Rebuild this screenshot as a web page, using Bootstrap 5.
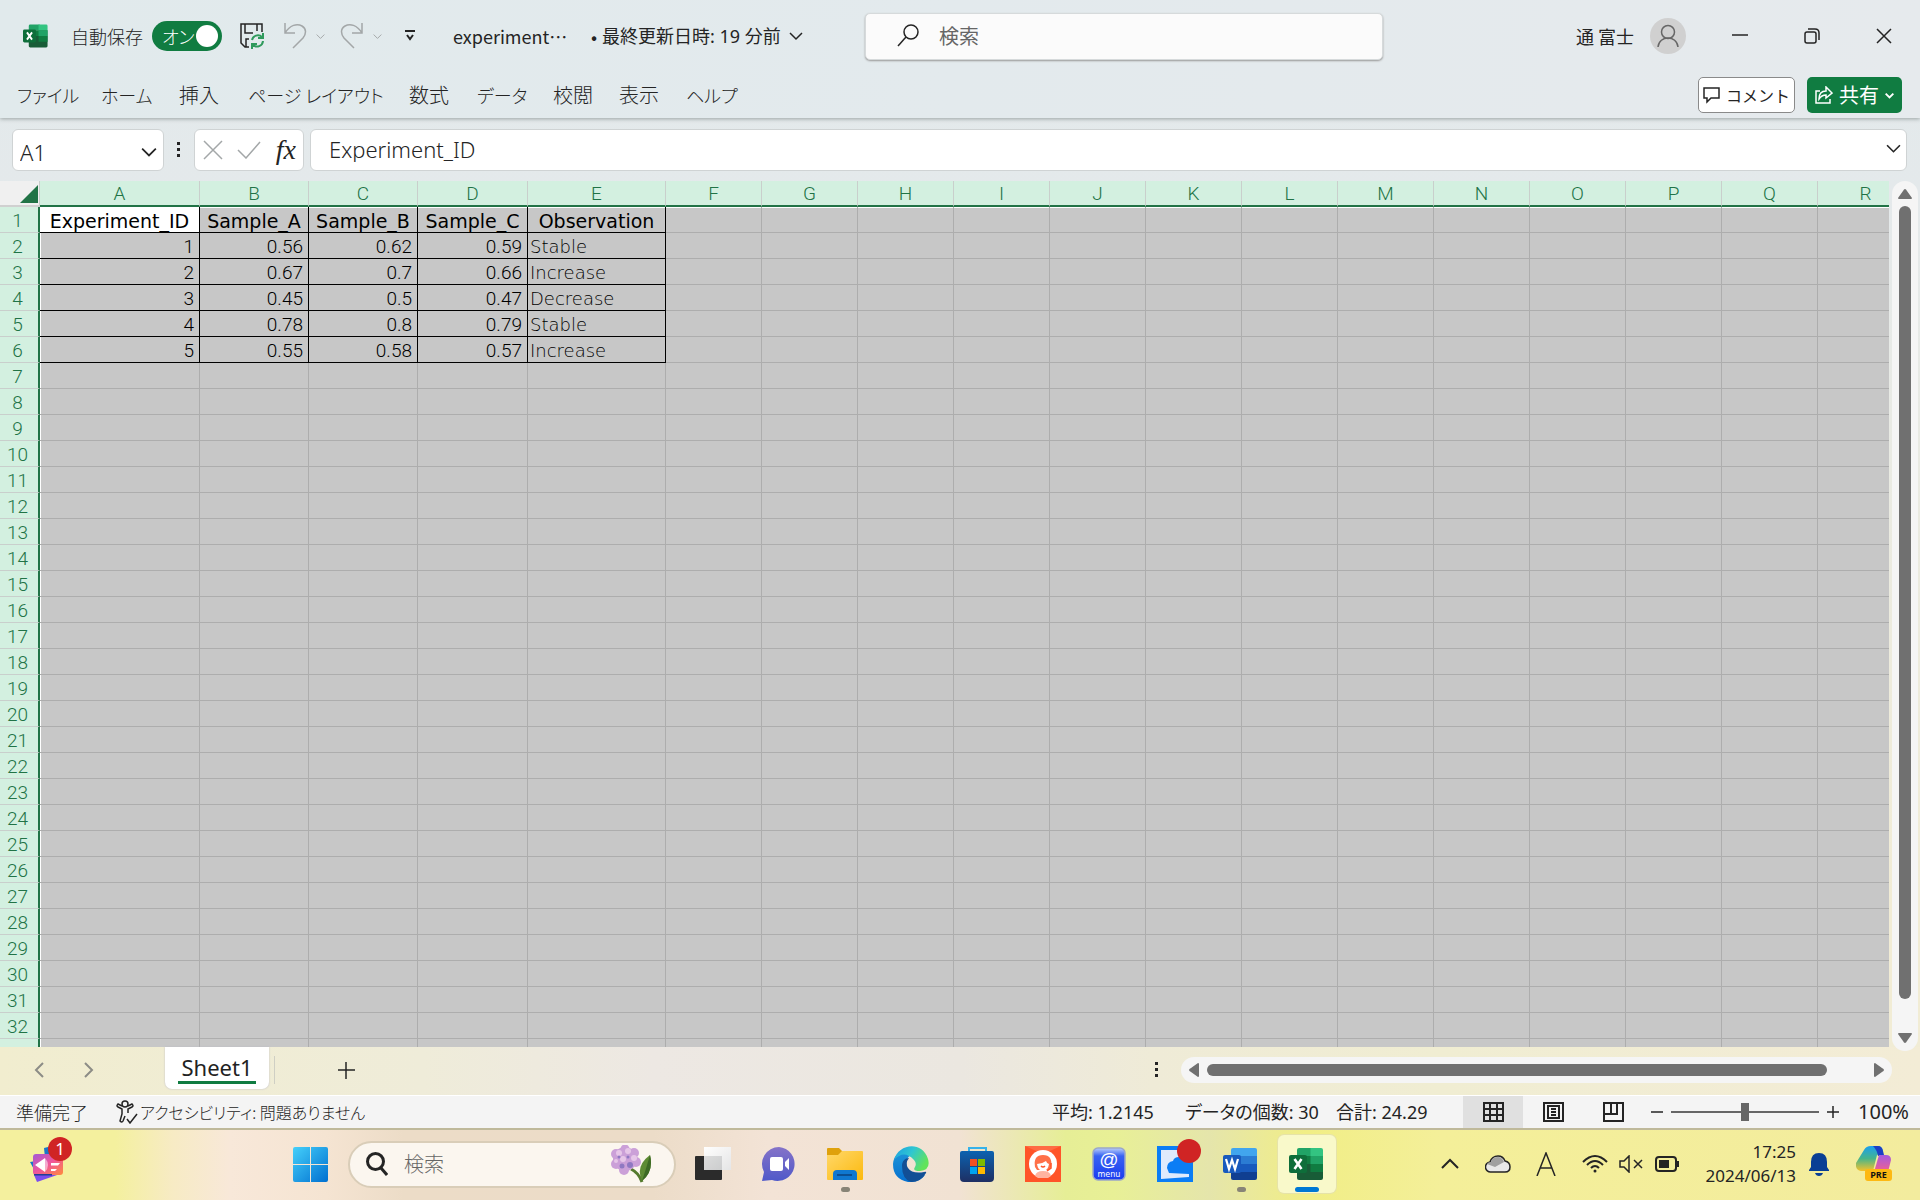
<!DOCTYPE html>
<html lang="ja">
<head>
<meta charset="utf-8">
<meta name="viewport" content="width=device-width, initial-scale=1">
<title>experiment - Excel</title>
<link href="https://cdn.jsdelivr.net/npm/bootstrap@5.3.0/dist/css/bootstrap.min.css" rel="stylesheet">
<style>
:root{--xl:#107c41;--ink:#242424;--head:#d3f0e0;--headline:#c9cfcc;--cell:#c7c7c7;--cellline:#adadad}
body{font-family:"Noto Sans","Noto Sans CJK JP",sans-serif;font-size:18px;line-height:26px;color:var(--ink);font-feature-settings:"palt";background:linear-gradient(#e3eaec 0,#e4e9eb 16%,#f1ecd5 75%);overflow:hidden}
svg{display:block;flex:none;fill:none;stroke:currentColor;stroke-width:1.5}
.plain{border:0;background:none;padding:0;color:inherit;display:flex;align-items:center;justify-content:center;flex:none}
.jp{font-family:"Noto Sans CJK JP",sans-serif;font-weight:300}
.latin{font-family:"Noto Sans","Noto Sans CJK JP",sans-serif}
/* title bar */
.titlebar{height:72px}
.ribbon{background:linear-gradient(90deg,#e1eaec,#e3eaed 50%,#e6eaed);box-shadow:0 1px 4px #9aa3a3;position:relative}
.saveswitch{width:70px;height:30px;border-radius:15px;background:var(--xl);color:#fff;padding:0 4px 0 10px}
.saveknob{width:22px;height:22px;border-radius:50%;background:#fff}
.quick{width:24px;height:32px}
.muted{color:#a3a7a8}
.findbox{width:518px;height:47px;background:#fbfbfb;border:1px solid #d6dadb;border-radius:5px;box-shadow:0 1px 2px #999;padding:0 30px}
.bare{border:0;background:none;outline:0;padding:0;min-width:0;color:inherit;width:100%}
.bare::placeholder{color:#666;opacity:1}
.avatar{width:36px;height:36px;border-radius:50%;background:#d0d0d0;color:#666}
.wbtn{width:72px;height:72px}
/* ribbon tabs */
.tabs{height:46px;padding:0 18px 0 17px}
.tabgrid{display:grid;grid-template-columns:84px 78px 69px 161px 68px 76px 66px 67px 70px;font-size:20px;align-items:center}
.tabgrid a{color:inherit;text-decoration:none;white-space:nowrap}
.tabgrid .kana{font-size:18px}
.rbtn{height:36px;border-radius:5px;font-size:20px;padding:0 7px;gap:6px}
.rbtn.cm{background:#fff;border:1px solid #8a8a8a;width:97px;font-size:16px}
.rbtn.sh{background:var(--xl);color:#fff;width:95px}
/* formula bar */
.fbar{padding:11px 13px 10px 12px}
.fbox{height:42px;background:#fff;border:1px solid #cfd3d4;border-radius:6px}
.fbox .bare{font-size:22px;font-weight:300}
/* grid */
.sheetarea{min-height:0}
.gridwrap{overflow:hidden;min-width:0;background:var(--cell)}
.xl{table-layout:fixed;border-collapse:separate;border-spacing:0;width:1914px;font-family:Roboto,sans-serif;font-size:19px;font-weight:300;color:#000;line-height:22px}
.xl th,.xl td{height:26px;padding:3px 5px 0 2px;overflow:hidden;white-space:nowrap;border-right:1px solid var(--cellline);border-bottom:1px solid var(--cellline);vertical-align:bottom}
.xl thead th{background:var(--head);color:#217346;font-weight:300;text-align:center;border-right-color:var(--headline);border-bottom:2px solid #217346;padding:2px 0 0}
.xl thead th.cornercell{background:#f0f0f0;border-bottom-color:#d0d0d0}
.cornercell svg{margin:0 1px 2px auto}
.xl tbody th{background:var(--head);color:#217346;font-weight:300;text-align:center;border-right:2px solid #217346;border-bottom-color:var(--headline);padding:3px 3px 0 0}
.xl tbody td:nth-child(2){box-shadow:inset 1px 0 #fff}
.xl tbody tr:first-child td{box-shadow:inset 0 1px #fff}
.xl td.filled{border-color:#000}
.xl td.num{text-align:right}
.xl td.txt,.xl td.ttl{font-family:"DejaVu Sans",sans-serif;font-size:18px;font-weight:200}
.xl td.ttl{font-size:19px;font-weight:400;text-align:center;padding:3px 0 0}
.xl td.cur{background:#fff}
.vbar{width:26px;margin:0 2px -4px 3px;border-radius:13px;background:#f5f5f5;color:#707070;padding:8px 0;position:relative}
.hbar{height:26px;border-radius:13px;background:#f5f5f5;color:#707070;padding:0 8px}
.thumb{background:#707070;border-radius:6px}
.scrollarrow{fill:currentColor;stroke:none}
/* sheet tabs */
.sheettabs{height:48px;padding-bottom:2px;background:linear-gradient(90deg,#f1edcf 0,#efecd9 22%,#ede8e3 34%,#ebe7e0 50%,#efebd7 60%,#f0edd2 75%,#f3ecd6)}
.sheettab{width:104px;height:42px;background:#fff;border-radius:0 0 7px 7px;box-shadow:0 0 2px #b9b9c6;font-size:22px;line-height:28px;align-self:flex-start;color:#222;text-decoration:none}
.sheettab span{border-bottom:3px solid var(--xl);width:78px}
.tabrule{width:1px;height:28px;background:#cfcfc4;margin-left:5px}
/* status */
.status{height:33px;background:#f4f4f4;border-top:1px solid #fff}
.viewbtn{width:60px;height:32px}
.viewbtn.on{background:#e0e0e0}
.zoomrange{appearance:none;width:148px;height:18px;background:linear-gradient(#666,#666) center/100% 2px no-repeat;margin:0}
.zoomrange::-webkit-slider-thumb{appearance:none;width:8px;height:18px;background:#666}
/* taskbar */
.taskbar{height:72px;padding-bottom:2px;border-top:2px solid #bfb99a;background:linear-gradient(90deg,#f4f09e 0,#f4f09e 6%,#f7ebc4 9%,#f8e8d9 12%,#f5e4d2 17%,#ecdcc7 21%,#ecdcc8 34%,#f3e3d6 40%,#f1e2d3 50%,#e6ee96 55.5%,#e8f096 58%,#e5e5ab 63%,#f1ee86 68%,#f4ef99 75%,#f3ec9e)}
.tfind{width:328px;height:47px;border-radius:24px;background:#fbf6ef;border:2px solid #d9cdb8;padding:0 22px 0 16px;margin:0 8px 0 20px}
.app{width:58px;height:58px;border-radius:6px;position:relative}
.app.on{background:#f9f9ca;box-shadow:0 0 0 1px #e6e3a8}
.app.run::after{content:"";position:absolute;bottom:1px;left:50%;margin-left:-4px;width:9px;height:5px;border-radius:3px;background:#888477}
.app.on::after{width:24px;margin-left:-12px;background:#0078d4}
.dotbadge{position:absolute;width:24px;height:24px;border-radius:50%;background:#d02424;color:#fff;line-height:24px;font-size:17px;text-align:center}
.app svg,.logo{stroke:none}
.apps{gap:8px}
.clock{font-size:17px;line-height:24px;width:100px}
</style>
<script src="https://cdn.jsdelivr.net/npm/bootstrap@5.3.0/dist/js/bootstrap.bundle.min.js"></script>
</head>
<body class="vh-100 d-flex flex-column">
<svg width="0" height="0" class="position-absolute" aria-hidden="true">
 <defs>
  <linearGradient id="gwin" x1="0" y1="0" x2="1" y2="1"><stop offset="0" stop-color="#45d0fa"/><stop offset="1" stop-color="#006fd0"/></linearGradient>
  <linearGradient id="gpink" x1="0" y1="0" x2="1" y2="1"><stop offset="0" stop-color="#a259d8"/><stop offset=".5" stop-color="#f0569a"/><stop offset="1" stop-color="#ff8a3c"/></linearGradient>
  <linearGradient id="gchat" x1="0" y1="0" x2="0" y2="1"><stop offset="0" stop-color="#8573c8"/><stop offset="1" stop-color="#5059c9"/></linearGradient>
  <linearGradient id="gfold" x1="0" y1="0" x2="1" y2="1"><stop offset="0" stop-color="#ffd86a"/><stop offset="1" stop-color="#fcb90e"/></linearGradient>
  <linearGradient id="gedge" x1="0" y1="0" x2="1" y2=".5"><stop offset="0" stop-color="#1b9de2"/><stop offset=".5" stop-color="#2fc6d2"/><stop offset="1" stop-color="#62e35b"/></linearGradient>
  <linearGradient id="gedge2" x1="0" y1="0" x2="0" y2="1"><stop offset="0" stop-color="#1c93d8"/><stop offset="1" stop-color="#0670cf"/></linearGradient>
  <linearGradient id="gstore" x1="0" y1="0" x2="0" y2="1"><stop offset="0" stop-color="#0c62b0"/><stop offset="1" stop-color="#1e2f63"/></linearGradient>
  <linearGradient id="gmenu" x1="0" y1="0" x2="0" y2="1"><stop offset="0" stop-color="#bcd0fb"/><stop offset=".25" stop-color="#3863f2"/><stop offset="1" stop-color="#1b3cf0"/></linearGradient>
  <linearGradient id="gtv" x1="0" y1="0" x2="1" y2="1"><stop offset="0" stop-color="#fff"/><stop offset="1" stop-color="#d4d6d8"/></linearGradient>
  <linearGradient id="gcop" x1="0" y1="0" x2="0" y2="1"><stop offset="0" stop-color="#1a9ff0"/><stop offset=".5" stop-color="#46b58c"/><stop offset="1" stop-color="#f6c22a"/></linearGradient>
  <linearGradient id="gcop2" x1="0" y1="0" x2="0" y2="1"><stop offset="0" stop-color="#a45be0"/><stop offset="1" stop-color="#f4608c"/></linearGradient>
  <symbol id="excel" viewBox="0 0 36 36"><path fill="#21a366" d="M10 2h13v8H8V4q0-2 2-2z"/><path fill="#33c481" d="M21.500 2H32q2 0 2 2v6H21.500z"/><path fill="#107c41" d="M8 10h26v8H8z"/><path fill="#21a366" d="M21.500 10H34v8H21.500z"/><path fill="#185c37" d="M8 18h26v14q0 2-2 2H10q-2 0-2-2z"/><path fill="#107c41" d="M21.500 18H34v8H21.500z"/><rect y="9" width="18" height="18" rx="2" fill="#0e6e3a"/><path stroke="#fff" stroke-width="2.600" d="m5.500 13 7 10m0-10-7 10"/></symbol>
  <symbol id="word" viewBox="0 0 36 36"><path fill="#41a5ee" d="M10 2h22q2 0 2 2v6H8V4q0-2 2-2z"/><path fill="#2b7cd3" d="M8 10h26v8H8z"/><path fill="#185abd" d="M8 18h26v8H8z"/><path fill="#103f91" d="M8 26h26v6q0 2-2 2H10q-2 0-2-2z"/><rect y="9" width="18" height="18" rx="2" fill="#185abd"/><path stroke="#fff" stroke-width="2.200" fill="none" d="m3 13 3 10 3-9 3 9 3-10"/></symbol>
  <symbol id="chev" viewBox="0 0 14 14"><path fill="none" stroke="currentColor" d="m1 4 6 6 6-6"/></symbol>
 </defs>
</svg>

<header class="ribbon jp">
 <div class="titlebar d-flex align-items-center">
  <svg class="logo" style="margin-left:23px" width="26" height="26"><use href="#excel"/></svg>
  <label class="d-flex align-items-center" style="margin-left:22px"><span class="me-2 text-nowrap" style="width:73px">自動保存</span>
   <input type="checkbox" class="visually-hidden" checked>
   <span class="saveswitch d-flex align-items-center justify-content-between"><span>オン</span><span class="saveknob"></span></span></label>
  <button class="plain quick" style="margin-left:18px" aria-label="保存"><svg width="24" height="26" viewBox="0 0 24 26"><path d="M9 24H5l-4-4V1h21v8M5 1v9h8m4-9v7M6 24v-8h3"/><path stroke="#2f9a5c" stroke-width="2" d="M12 17a6 6 0 0 1 10-3m1-4v5h-5m5 3a6 6 0 0 1-10 4m-1 4v-5h5"/></svg></button>
  <button class="plain quick muted" style="margin-left:19px" aria-label="元に戻す"><svg width="24" height="28" viewBox="0 0 24 28" stroke-width="2"><path d="M2 1v10h10M2 11C7 3 14 1 19 4s4 8 1 12L10 26"/></svg></button>
  <button class="plain muted ms-2" style="width:10px" aria-label="元に戻す一覧"><svg width="9" height="9"><use href="#chev"/></svg></button>
  <button class="plain quick muted" style="margin-left:15px" aria-label="やり直し"><svg width="24" height="28" viewBox="0 0 24 28" stroke-width="2"><path d="M22 1v10H12m10 0C17 3 10 1 5 4s-4 8-1 12l10 10"/></svg></button>
  <button class="plain muted ms-2" style="width:10px" aria-label="やり直し一覧"><svg width="9" height="9"><use href="#chev"/></svg></button>
  <button class="plain" style="width:12px;margin-left:22px" aria-label="クイック アクセス"><svg width="12" height="12" viewBox="0 0 12 12"><path stroke-width="2" d="M1 1h10M3 5l3 4 3-4"/></svg></button>
  <button class="plain text-nowrap" style="margin-left:37px;width:412px;justify-content:flex-start"><span style="width:133px;text-align:left">experiment⋯</span><span style="width:16px">•</span><span class="latin">最終更新日時: 19 分前</span><svg class="ms-2" width="14" height="14"><use href="#chev"/></svg></button>
  <label class="findbox d-flex align-items-center"><svg width="24" height="24" viewBox="0 0 24 24" stroke="#555"><circle cx="15" cy="8" r="7"/><path d="M10 13 2 22"/></svg><input class="bare" style="font-size:20px;margin-left:19px" type="search" placeholder="検索" aria-label="検索"></label>
  <button class="plain ms-auto"><span class="me-3">通 富士</span><span class="avatar d-flex justify-content-center align-items-center"><svg width="24" height="24" viewBox="0 0 24 24"><circle cx="12" cy="8" r="6.500"/><path d="M2 23c1-12 19-12 20 0"/></svg></span></button>
  <button class="plain wbtn" style="margin-left:18px" aria-label="最小化"><svg width="16" height="16"><path d="M0 7h16"/></svg></button>
  <button class="plain wbtn" aria-label="元のサイズ"><svg width="16" height="16" viewBox="0 0 16 16"><rect x="1" y="4" width="11" height="11" rx="2"/><path d="M4 1h7q4 0 4 4v7"/></svg></button>
  <button class="plain wbtn" aria-label="閉じる"><svg width="16" height="16"><path d="m1 1 14 14M15 1 1 15"/></svg></button>
 </div>
 <div class="tabs d-flex align-items-center justify-content-between">
  <nav class="tabgrid"><a href="#" class="kana">ファイル</a><a href="#" class="kana">ホーム</a><a href="#">挿入</a><a href="#" class="kana">ページ レイアウト</a><a href="#">数式</a><a href="#" class="kana">データ</a><a href="#">校閲</a><a href="#">表示</a><a href="#" class="kana">ヘルプ</a></nav>
  <div class="d-flex" style="gap:12px">
   <button class="plain rbtn cm text-nowrap"><svg width="17" height="17" viewBox="0 0 17 17"><path d="M1 1h15v10H8l-4 4v-4H1z"/></svg>コメント</button>
   <button class="plain rbtn sh text-nowrap"><svg width="18" height="18" viewBox="0 0 18 18"><path d="M5 5H1v12h14v-4M4 13c0-6 3-8 7-8V1l6 6-6 5V9c-3 0-5 1-7 4z"/></svg>共有<svg width="9" height="9" style="stroke-width:3"><use href="#chev"/></svg></button>
  </div>
 </div>
</header>

<div class="fbar d-flex align-items-center">
 <div class="fbox d-flex align-items-center" style="width:152px;padding:3px 6px 0 7px"><input class="bare" value="A1" aria-label="名前ボックス"><button class="plain" aria-label="名前一覧"><svg width="16" height="16"><use href="#chev"/></svg></button></div>
 <svg width="30" height="18" class="scrollarrow"><path d="M13 1h3v3h-3zm0 6h3v3h-3zm0 6h3v3h-3z"/></svg>
 <div class="fbox d-flex align-items-center justify-content-between" style="width:110px;padding:0 7px 0 8px">
  <button class="plain muted" aria-label="キャンセル"><svg width="20" height="20"><path d="m1 1 18 18M19 1 1 19"/></svg></button>
  <button class="plain muted" aria-label="入力"><svg width="24" height="18"><path d="m1 9 8 8L23 1"/></svg></button>
  <button class="plain" style="font:italic 28px/36px 'Liberation Serif',serif" aria-label="関数の挿入">fx</button>
 </div>
 <div class="fbox d-flex align-items-center flex-grow-1" style="margin-left:6px;padding:0 5px 3px 18px"><input class="bare" value="Experiment_ID" aria-label="数式バー"><button class="plain" aria-label="数式バーの展開"><svg width="15" height="15"><use href="#chev"/></svg></button></div>
</div>

<main class="sheetarea d-flex flex-grow-1">
 <div class="gridwrap flex-grow-1"><table class="xl" id="sheet"></table></div>
 <div class="vbar d-flex flex-column align-items-center flex-shrink-0">
  <svg class="scrollarrow" width="14" height="10"><path d="M7 0q1 0 2 2l5 7q0 1-1 1H1q-1 0-1-1l5-7q1-2 2-2z"/></svg>
  <div class="thumb flex-grow-1" style="width:12px;margin:7px 0 34px"></div>
  <svg class="scrollarrow" width="14" height="10"><path d="M7 10q1 0 2-2l5-7q0-1-1-1H1Q0 0 0 1l5 7q1 2 2 2z"/></svg>
 </div>
</main>

<div class="sheettabs d-flex align-items-center flex-shrink-0">
 <button class="plain" style="margin-left:34px;color:#8c8c86" aria-label="前のシート"><svg width="11" height="16"><path stroke-width="2" d="M9 1 2 8l7 7"/></svg></button>
 <button class="plain" style="margin-left:38px;color:#8c8c86" aria-label="次のシート"><svg width="11" height="16"><path stroke-width="2" d="m2 1 7 7-7 7"/></svg></button>
 <a href="#" class="sheettab d-flex justify-content-center align-items-center text-center" style="margin-left:71px"><span>Sheet1</span></a>
 <div class="tabrule"></div>
 <button class="plain" style="margin-left:63px" aria-label="新しいシート"><svg width="17" height="17"><path d="M8 0v17M0 8h17"/></svg></button>
 <svg class="scrollarrow ms-auto" width="4" height="16"><path d="M0 0h3v3H0zm0 6h3v3H0zm0 6h3v3H0z"/></svg>
 <div class="hbar d-flex align-items-center" style="width:711px;margin:0 28px 0 22px">
  <svg class="scrollarrow" width="10" height="14"><path d="M0 7q0-1 2-2l7-5q1 0 1 1v12q0 1-1 1L2 9Q0 8 0 7z"/></svg>
  <div class="thumb flex-grow-1" style="height:12px;margin:0 47px 0 8px"></div>
  <svg class="scrollarrow" width="10" height="14"><path d="M10 7q0-1-2-2L1 0Q0 0 0 1v12q0 1 1 1l7-5q2-1 2-2z"/></svg>
 </div>
</div>

<footer class="status d-flex align-items-center flex-shrink-0 text-nowrap">
 <span class="jp" style="margin-left:16px;width:100px">準備完了</span>
 <svg width="24" height="24" viewBox="0 0 24 24"><circle cx="9" cy="4" r="3"/><path d="M6 6 2 4Q0 6 2 7l4 2v5l-2 7q2 2 3 0l2-5M12 6l4-2q2 2 0 3l-4 2v4M11 19l3 4 7-9"/></svg>
 <span class="jp" style="font-size:16px">アクセシビリティ: 問題ありません</span>
 <div class="ms-auto d-flex align-items-center">
  <span style="width:133px">平均: 1.2145</span><span style="width:151px">データの個数: 30</span><span style="width:127px">合計: 24.29</span>
  <button class="plain viewbtn on" aria-label="標準"><svg width="21" height="20"><path stroke-width="2" d="M1 1h19v18H1zM7 1v18M14 1v18M1 7h19M1 13h19"/></svg></button>
  <button class="plain viewbtn" aria-label="ページ レイアウト表示"><svg width="21" height="20"><path stroke-width="2" d="M1 1h19v18H1zM5 4h11v12H5zM8 7h5M8 10h5M8 13h5"/></svg></button>
  <button class="plain viewbtn" aria-label="改ページ プレビュー"><svg width="21" height="20"><path stroke-width="2" d="M1 1h19v18H1zM2 12h12V1M8 1v11"/></svg></button>
  <button class="plain" style="width:28px" aria-label="縮小"><svg width="12" height="12"><path d="M0 6h12"/></svg></button>
  <input type="range" class="zoomrange" min="0" max="100" value="50" aria-label="ズーム">
  <button class="plain" style="width:28px" aria-label="拡大"><svg width="12" height="12"><path d="M0 6h12M6 0v12"/></svg></button>
  <span class="text-end" style="width:62px;margin-right:11px;font-size:20px">100%</span>
 </div>
</footer>

<div class="taskbar d-flex align-items-center flex-shrink-0">
 <button class="plain app" style="margin-left:18px" aria-label="ウィジェット"><svg width="34" height="36" viewBox="0 0 34 36"><path fill="#1976c9" d="M14 2 22 0l3 10-10 2zM0 16l6-1v12z"/><path fill="#7c4dee" d="M4 29h23L7 36z"/><rect x="3" y="8" width="30" height="21" rx="3" fill="url(#gpink)"/><path fill="#233f92" d="M4 28h18v1.500H4z"/><path fill="#fff" d="M5 19 15 12v14zM21 17h9l-2 2.500h-7zM21 23h6l-2 2h-4z"/><path fill="#fff" opacity=".5" d="M15 12q6 7 0 14z"/></svg><span class="dotbadge" style="left:30px;top:2px">1</span></button>
 <button class="plain" style="margin-left:217px" aria-label="スタート"><svg class="logo" width="35" height="35" viewBox="0 0 35 35"><path fill="url(#gwin)" d="M2 0h15v17H0V2q0-2 2-2zM18 0h15q2 0 2 2v15H18zM0 18h17v17H2q-2 0-2-2zM18 18h17v15q0 2-2 2H18z"/></svg></button>
 <label class="tfind d-flex align-items-center"><svg width="22" height="24" viewBox="0 0 22 24" style="stroke-width:3"><circle cx="9.500" cy="9.500" r="8"/><path d="m15 16 6 7"/></svg><input type="search" class="bare jp" style="margin-left:16px;font-size:20px" placeholder="検索" aria-label="タスクバー検索">
  <svg class="logo" width="42" height="38" viewBox="0 0 42 38"><path fill="none" stroke="#557a2e" stroke-width="3" d="M21 24q8 4 11 13"/><path fill="#5d8b33" d="M32 36q-7-15 8-26 4 16-8 26z"/><path fill="#3d6a24" d="M32 36q4-12 8-26 4 16-8 26z"/><g fill="#cba0d8"><circle cx="15" cy="14" r="12"/><circle cx="6" cy="9" r="5"/><circle cx="15" cy="4" r="4.500"/><circle cx="24" cy="8" r="5"/><circle cx="26" cy="17" r="5"/><circle cx="6" cy="19" r="5"/><circle cx="14" cy="25" r="5"/></g><g fill="#e6c6e8"><circle cx="9" cy="8" r="3"/><circle cx="18" cy="6" r="3"/><circle cx="24" cy="13" r="3"/><circle cx="13" cy="14" r="3"/><circle cx="6" cy="16" r="2"/></g><g fill="#8f78c2"><circle cx="20" cy="20" r="3"/><circle cx="12" cy="21" r="2.500"/><circle cx="18" cy="12" r="1.500"/><circle cx="9" cy="12" r="1.500"/></g></svg></label>
 <div class="apps d-flex">
  <button class="plain app" aria-label="タスク ビュー"><svg width="36" height="36" viewBox="0 0 36 36"><rect y="10" width="27" height="24" rx="1" fill="#2b2b2b"/><path fill="#fff" opacity=".9" d="M9 1h27v23H27V10H9z"/><path fill="#b4b4b4" d="M9 10h18v14H9z"/><rect x="9" y="1" width="27" height="23" fill="url(#gtv)" opacity=".6"/></svg></button>
  <button class="plain app" aria-label="チャット"><svg width="34" height="34" viewBox="0 0 34 34"><path fill="url(#gchat)" d="M17 0a17 17 0 1 1-7 33L0 34l2-9A17 17 0 0 1 17 0z"/><rect x="8" y="10" width="13" height="14" rx="2" fill="#fff"/><path fill="#fff" d="m23 15 4-4v12l-4-4z"/></svg></button>
  <button class="plain app run" aria-label="エクスプローラー"><svg width="36" height="34" viewBox="0 0 36 34"><path fill="#dfa10c" d="M0 2q0-1 1-1h11l3 3v6H0z"/><path fill="url(#gfold)" d="M0 8h11l4-4h20q1 0 1 1v27q0 1-1 1H1q-1 0-1-1z"/><path fill="#0f78d0" d="M6 33v-6q0-4 4-4h16q4 0 4 4v6z"/><path fill="#0b4f92" d="M10 27h15v2H10z"/></svg></button>
  <button class="plain app" aria-label="Edge"><svg width="36" height="36" viewBox="0 0 36 36"><path fill="url(#gedge2)" d="M0 18C1 7 9 5 18 9q-6 4-5 11 2 13 19 9-6 8-17 7Q0 33 0 18z"/><path fill="#124f95" d="M9 20c0-5 3-8 7-8q-4 5-1 10 4 6 16 4 3-1 2 1-5 9-15 9-9-3-9-16z"/><path fill="url(#gedge)" d="M1 14C5-2 29-6 35 13q3 11-8 12-8 0-5-4 2-4-1-7Q11 3 1 14z"/></svg></button>
  <button class="plain app" aria-label="Store"><svg width="34" height="36" viewBox="0 0 34 36"><path fill="none" stroke="#35b2ea" stroke-width="2" d="M9 8V2h17v6"/><path fill="url(#gstore)" d="M0 7q0-2 2-2h30q2 0 2 2v25q0 4-4 4H4q-4 0-4-4z"/><path fill="#f25022" d="M10 13h7v7h-7z"/><path fill="#7fba00" d="M18 13h7v7h-7z"/><path fill="#00a4ef" d="M10 21h7v7h-7z"/><path fill="#ffb900" d="M18 21h7v7h-7z"/></svg></button>
  <button class="plain app" aria-label="サポート"><svg width="36" height="36" viewBox="0 0 36 36"><path fill="#ff5428" d="M0 0h36v36H0z"/><path fill="#ff6c44" d="M0 0h36L18 8z"/><circle cx="18" cy="18" r="14" fill="#fff"/><path fill="#ff7048" d="M10 21q-2-12 8-12t8 12l-2 3H12z"/><path fill="#fff" d="M12 18q5 0 9-3 1 3 3 3-1 7-6 7t-6-7z"/><path fill="#ffb3a0" d="M10 30q1-5 8-5t8 5l-3 2H13z"/><path fill="none" stroke="#ff5428" d="M16 20q2 2 4 0M26 17v5l-4 3"/></svg></button>
  <button class="plain app" aria-label="menu"><svg width="34" height="34" viewBox="0 0 34 34"><rect x="1" y="1" width="32" height="32" rx="5" fill="url(#gmenu)" stroke="#9ba7c8" stroke-width="1.500"/><text x="17" y="19" text-anchor="middle" font-family="Liberation Sans" font-size="19" fill="#fff">@</text><text x="17" y="30" text-anchor="middle" font-family="DejaVu Sans" font-size="8" fill="#fff">menu</text></svg></button>
  <button class="plain app" aria-label="クラウド"><svg width="36" height="36" viewBox="0 0 36 36"><path fill="#0b7df5" d="M0 0h36v36H0z"/><path fill="#dfeafc" d="M4 4h18v7q-5 0-6 4-6 1-6 7l2 5 20 1v3L4 33z"/></svg><span class="dotbadge" style="left:31px;top:4px"></span></button>
  <button class="plain app run" aria-label="Word"><svg width="36" height="36"><use href="#word"/></svg></button>
  <button class="plain app run on" aria-label="Excel"><svg width="36" height="36"><use href="#excel"/></svg></button>
 </div>
 <div class="ms-auto d-flex align-items-center">
  <button class="plain" aria-label="隠れているアイコン"><svg width="18" height="12"><path stroke-width="2" d="m1 10 8-8 8 8"/></svg></button>
  <svg style="margin-left:26px" width="26" height="18" viewBox="0 0 26 18"><path fill="#e8e8e8" d="M6 17a5 5 0 0 1-1-10q2-6 8-6 5 0 7 5 5 1 5 6t-5 5z"/><path fill="#a0a0a0" stroke="none" d="M2 9q1-2 4-2 1-5 7-5 4 0 6 5l-9 5z"/></svg>
  <svg style="margin-left:25px" width="20" height="24" viewBox="0 0 20 24" aria-label="A"><path d="m1 24 9-23 9 23M4 16h12"/></svg>
  <svg style="margin-left:26px" width="26" height="18" viewBox="0 0 26 18"><path stroke-width="2" d="M1 7Q13-5 25 7M5 10q8-8 16 0M9 13q4-4 8 0"/><circle cx="13" cy="16" r="1.500" fill="currentColor" stroke="none"/></svg>
  <svg style="margin-left:11px" width="24" height="18" viewBox="0 0 24 18"><path d="M1 6h4l5-5v16l-5-5H1zM15 5l8 8m0-8-8 8"/></svg>
  <svg style="margin-left:12px" width="25" height="16" viewBox="0 0 25 16"><rect x="1" y="1" width="20" height="14" rx="3" stroke-width="2"/><path fill="currentColor" stroke="none" d="M4 4h10v8H4zM22 5h2v6h-2z"/></svg>
  <div class="clock text-end" style="margin-left:16px">17:25<br>2024/06/13</div>
  <svg style="margin-left:12px" width="22" height="24" viewBox="0 0 22 24"><path fill="#0a3f94" stroke="none" d="M3 10q0-9 8-9t8 9v5l2 3v1H1v-1l2-3zM7 21h8q-1 3-4 3t-4-3z"/></svg>
  <svg class="logo" style="margin:0 28px 0 26px" width="36" height="36" viewBox="0 0 36 36"><path fill="url(#gcop)" d="M8 4q2-4 7-4h7q4 0 5 5l-6 4-4 16H5q-6-1-5-8z"/><path fill="#1d3fc4" d="M17 0h5q4 0 5 5l1 4-6 1q-1-6-5-10z"/><path fill="url(#gcop2)" d="M23 9h7q5 0 5 5l-3 12H18z"/><rect x="9" y="23" width="27" height="12" rx="3" fill="#fdb913"/><text x="22.500" y="32" text-anchor="middle" font-family="Open Sans" font-weight="700" font-size="9" fill="#111">PRE</text></svg>
 </div>
</div>

<script>
const widths = [40,160,109,109,110,138].concat(Array(13).fill(96));
const letters = 'ABCDEFGHIJKLMNOPQR'.split('');
const lastNumbered = 32;
const data = [
  ['Experiment_ID','Sample_A','Sample_B','Sample_C','Observation'],
  [1,0.56,0.62,0.59,'Stable'],
  [2,0.67,0.7,0.66,'Increase'],
  [3,0.45,0.5,0.47,'Decrease'],
  [4,0.78,0.8,0.79,'Stable'],
  [5,0.55,0.58,0.57,'Increase']
];
let html = '<colgroup>' + widths.map(w => `<col style="width:${w}px">`).join('') + '</colgroup><thead><tr>' +
  '<th class="cornercell"><svg class="scrollarrow" width="18" height="18"><path fill="#217346" d="M18 0v18H0z"/></svg></th>' +
  letters.map(l => `<th scope="col">${l}</th>`).join('') + '</tr></thead><tbody>';
for (let r = 0; r <= lastNumbered; r++) {
  html += `<tr><th scope="row">${r < lastNumbered ? r + 1 : ''}</th>`;
  for (let c = 0; c < letters.length; c++) {
    const v = data[r] && data[r][c];
    if (v === undefined) { html += '<td></td>'; continue; }
    const kind = r === 0 ? 'ttl' : typeof v === 'number' ? 'num' : 'txt';
    html += `<td class="filled ${kind}${r + c === 0 ? ' cur' : ''}">${v}</td>`;
  }
  html += '</tr>';
}
document.getElementById('sheet').innerHTML = html + '</tbody>';
</script>
</body>
</html>
